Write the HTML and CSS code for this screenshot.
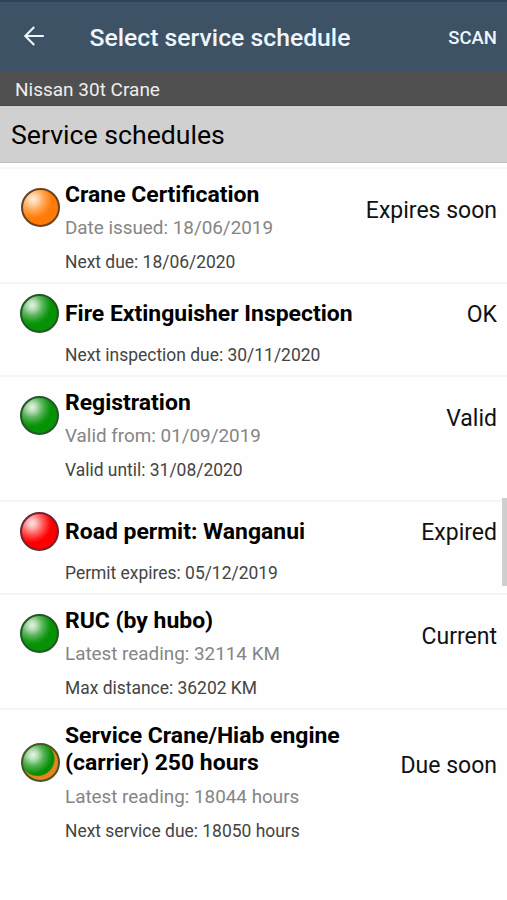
FILE: index.html
```html
<!DOCTYPE html>
<html lang="en">
<head>
<meta charset="utf-8">
<title>Select service schedule</title>
<link rel="stylesheet" href="styles.css">
</head>
<body>
<header class="appbar">
  <svg class="back" width="24" height="24" viewBox="0 0 24 24" fill="none" stroke="#eef6fb" stroke-width="2.1"><path d="M21.8 12H3.6M12.2 3.1L3.3 12l8.9 8.9"/></svg>
  <h1 class="appbar-title"><span>Select service schedule</span></h1>
  <span class="scan">SCAN</span>
</header>
<div class="vehicle"><span>Nissan 30t Crane</span></div>
<h2 class="section"><span>Service schedules</span></h2>
<main class="list">
  <section class="row r1">
    <div class="head"><i class="ball orange"></i><div class="text"><h3 class="name">Crane Certification</h3><p class="sub"><span>Date issued: 18/06/2019</span></p></div><span class="status">Expires soon</span></div>
    <p class="due"><span>Next due: 18/06/2020</span></p>
  </section>
  <section class="row compact r2">
    <div class="head"><i class="ball green"></i><div class="text"><h3 class="name">Fire Extinguisher Inspection</h3></div><span class="status">OK</span></div>
    <p class="due"><span>Next inspection due: 30/11/2020</span></p>
  </section>
  <section class="row r3">
    <div class="head"><i class="ball green"></i><div class="text"><h3 class="name">Registration</h3><p class="sub"><span>Valid from: 01/09/2019</span></p></div><span class="status">Valid</span></div>
    <p class="due"><span>Valid until: 31/08/2020</span></p>
  </section>
  <section class="row compact r4">
    <div class="head"><i class="ball red"></i><div class="text"><h3 class="name">Road permit: Wanganui</h3></div><span class="status">Expired</span></div>
    <p class="due"><span>Permit expires: 05/12/2019</span></p>
  </section>
  <section class="row r5">
    <div class="head"><i class="ball green"></i><div class="text"><h3 class="name">RUC (by hubo)</h3><p class="sub"><span>Latest reading: 32114 KM</span></p></div><span class="status">Current</span></div>
    <p class="due"><span>Max distance: 36202 KM</span></p>
  </section>
  <section class="row r6">
    <div class="head"><i class="ball mixed"></i><div class="text"><h3 class="name">Service Crane/Hiab engine<br>(carrier) 250 hours</h3><p class="sub"><span>Latest reading: 18044 hours</span></p></div><span class="status">Due soon</span></div>
    <p class="due"><span>Next service due: 18050 hours</span></p>
  </section>
</main>
<div class="scrollbar"></div>
</body>
</html>
```
FILE: styles.css
```css
* { box-sizing: border-box; margin: 0; padding: 0; }
body { width: 507px; height: 900px; overflow: hidden; background: #fefefe; font-family: Roboto, "Liberation Sans", sans-serif; color: #000; position: relative; }
.appbar { height: 71px; display: flex; align-items: center; padding: 2px 10px 0 22px; background: #3e5266; border-top: 2px solid #2b4258; color: #eef6fb; }
.back { flex: none; margin-bottom: 3px; }
.appbar-title { margin-left: 43.5px; font-size: 24.75px; font-weight: 500; line-height: 30px; flex: 1; white-space: nowrap; }
.scan { font-size: 18.5px; font-weight: 500; line-height: 24px; }
.vehicle { height: 35px; padding-left: 15px; background: #505050; color: #eee; font-size: 19px; line-height: 38px; border-bottom: 1px solid #484848; }
.section { height: 57px; padding-left: 11px; background: #d0d0d0; border-bottom: 1px solid #c1c1bd; font-size: 26.65px; font-weight: 400; line-height: 58px; }
.list { margin-top: 4px; border-top: 2px solid #f8f7f4; }
.row { height: 115px; padding: 13px 10px 0 21px; border-bottom: 2px solid #f5f5f5; }
.head { display: flex; align-items: center; }
.text { flex: 1; margin-left: 5px; white-space: nowrap; }
.name { font-size: 22.95px; font-weight: 700; line-height: 27px; margin-top: -1px; }
.sub { margin-top: 7px; font-size: 18.85px; line-height: 27px; color: #858585; }
.due { margin: 8px 0 0 44px; font-size: 17.45px; line-height: 24px; color: #444; }
.status { margin-bottom: 4px; font-size: 23px; line-height: 27px; color: #111; }
.compact { height: 93px; padding-top: 10px; }
.compact .name { margin-top: 0; }
.compact .due { margin-top: 10px; }
.compact .status { margin: 2px 0 0; }
.r3 { height: 125px; }
.r6 { height: 160px; border-bottom: 0; }
.r6 .sub { margin-top: 8px; }
.r6 .status { margin-bottom: 3px; }
.ball { flex: none; width: 39px; height: 39px; margin-bottom: 9px; border-radius: 50%; border: 2px solid #24552a; background-origin: border-box; }
.compact .ball { margin-bottom: 0; }
.green, .red { margin-left: -1px; margin-right: 1px; }
.green { background-image: radial-gradient(circle at 31% 29%, #e6f6e4 0, #b0dab0 13%, #5cb45b 27%, #1c9b1b 42%, #079205 50%); }
.orange { border-color: #6c4322; background-image: radial-gradient(circle at 31% 29%, #fff0df 0, #ffd2a6 13%, #ffaa59 27%, #ff8a20 42%, #ff7b06 50%); }
.red { border-color: #702330; background-image: radial-gradient(circle at 31% 29%, #ffe5e5 0, #ffb0b0 13%, #ff6262 27%, #ff1d1d 42%, #fc0000 50%); }
.mixed { border-color: #4b5426; background-image: radial-gradient(circle 19px at 12px 12px, rgba(245,252,244,.95) 0, rgba(255,255,255,.68) 28%, rgba(255,255,255,.3) 58%, transparent 100%), radial-gradient(circle 18px at 16.5px 16px, #079205 0, #078d05 90%, #e98220 98%); }
.scrollbar { position: absolute; right: 0; top: 498px; width: 5px; height: 88px; background: #cfcfcf; }
```
